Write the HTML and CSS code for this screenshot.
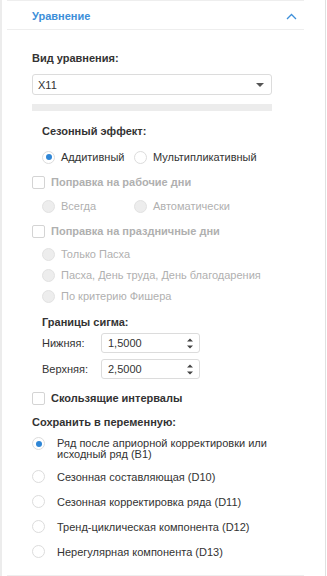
FILE: index.html
```html
<!DOCTYPE html>
<html lang="ru">
<head>
<meta charset="utf-8">
<link rel="stylesheet" href="styles.css">
</head>
<body>
<div class="frame">
  <div class="panel">
    <div class="header">
      <span class="header-title">Уравнение</span>
      <svg class="chevron" width="11" height="7" viewBox="0 0 11 7"><path d="M1 6 L5.5 1.5 L10 6" fill="none" stroke="#3d8fd9" stroke-width="1.3"/></svg>
    </div>
    <div class="content">
      <div class="title t1">Вид уравнения:</div>
      <div class="select">
        <span>X11</span>
        <svg class="caret" width="8" height="4" viewBox="0 0 8 4"><path d="M0 0 H8 L4 4 Z" fill="#555"/></svg>
      </div>
      <div class="bar"></div>

      <div class="indent">
        <div class="title t2">Сезонный эффект:</div>
        <div class="row r-season">
          <label class="opt w-add"><span class="radio checked"></span>Аддитивный</label>
          <label class="opt"><span class="radio"></span>Мультипликативный</label>
        </div>
      </div>

      <label class="row check-row r-work disabled"><span class="check"></span><b>Поправка на рабочие дни</b></label>
      <div class="indent">
        <div class="row r-always disabled">
          <label class="opt w-add"><span class="radio off"></span>Всегда</label>
          <label class="opt"><span class="radio off"></span>Автоматически</label>
        </div>
      </div>

      <label class="row check-row r-hol disabled"><span class="check"></span><b>Поправка на праздничные дни</b></label>
      <div class="indent disabled">
        <label class="row opt r-easter"><span class="radio off"></span>Только Пасха</label>
        <label class="row opt r-next"><span class="radio off"></span>Пасха, День труда, День благодарения</label>
        <label class="row opt r-next"><span class="radio off"></span>По критерию Фишера</label>
      </div>

      <div class="indent">
        <div class="title t-sigma">Границы сигма:</div>
        <div class="spin-row s1">
          <span class="spin-label">Нижняя:</span>
          <div class="spin"><span>1,5000</span>
            <span class="arrows"><svg width="6" height="11" viewBox="0 0 6 11"><path d="M0 3.5 L3 0.5 L6 3.5 Z M0 7.5 L3 10.5 L6 7.5 Z" fill="#444"/></svg></span>
          </div>
        </div>
        <div class="spin-row s2">
          <span class="spin-label">Верхняя:</span>
          <div class="spin"><span>2,5000</span>
            <span class="arrows"><svg width="6" height="11" viewBox="0 0 6 11"><path d="M0 3.5 L3 0.5 L6 3.5 Z M0 7.5 L3 10.5 L6 7.5 Z" fill="#444"/></svg></span>
          </div>
        </div>
      </div>

      <label class="row check-row r-slide"><span class="check"></span><b>Скользящие интервалы</b></label>

      <div class="title t-save">Сохранить в переменную:</div>
      <div class="save-list">
        <label class="save-item first"><span class="radio checked"></span><span class="save-text">Ряд после априорной корректировки или исходный ряд (B1)</span></label>
        <label class="save-item"><span class="radio"></span><span class="save-text">Сезонная составляющая (D10)</span></label>
        <label class="save-item"><span class="radio"></span><span class="save-text">Сезонная корректировка ряда (D11)</span></label>
        <label class="save-item"><span class="radio"></span><span class="save-text">Тренд-циклическая компонента (D12)</span></label>
        <label class="save-item"><span class="radio"></span><span class="save-text">Нерегулярная компонента (D13)</span></label>
      </div>
    </div>
  </div>
</div>
</body>
</html>
```

FILE: styles.css
```css
* { box-sizing: border-box; }
html, body { margin: 0; padding: 0; }
body {
  background: #ffffff;
  font-family: "Liberation Sans", Arial, sans-serif;
  font-size: 11px;
  color: #333333;
  width: 327px;
  height: 576px;
  overflow: hidden;
}
.frame {
  width: 326px;
  height: 576px;
  border-left: 2px solid #ececec;
  border-right: 1px solid #e0e0e0;
}
.panel {
  margin-left: 5px;
  width: 297px;
  height: 576px;
  border-top: 1px solid #eeeeee;
  border-bottom: 1px solid #eeeeee;
}
.header {
  height: 29px;
  border-bottom: 1px solid #eeeeee;
  display: flex;
  align-items: center;
  justify-content: space-between;
  padding: 0 7px 0 25px;
}
.header-title {
  font-weight: bold;
  font-size: 11px;
  color: #3d8fd9;
  line-height: 16px;
  margin-top: 1px;
}
.chevron { margin-top: 2px; }
.content { padding-left: 25px; }
.title {
  font-weight: bold;
  line-height: 16px;
  height: 16px;
  color: #333;
}
.t1 { margin-top: 20px; }
.select {
  margin-top: 8px;
  width: 240px;
  height: 21px;
  border: 1px solid #dcdcdc;
  border-radius: 3px;
  display: flex;
  align-items: center;
  justify-content: space-between;
  padding: 0 7px 0 5px;
  color: #333;
}
.bar {
  margin-top: 9px;
  width: 240px;
  height: 7px;
  background: #ececec;
}
.indent { padding-left: 10px; }
.t2 { margin-top: 12px; }
.row {
  display: flex;
  align-items: center;
  height: 16px;
}
.opt {
  display: flex;
  align-items: center;
}
.w-add { width: 92px; }
.r-season { margin-top: 10px; }
.r-work { margin-top: 9px; }
.r-always { margin-top: 8px; }
.r-hol { margin-top: 9px; }
.r-easter { margin-top: 7px; }
.r-next { margin-top: 5px; }
.disabled, .disabled b { color: #b0b0b0; }
.radio {
  width: 13px;
  height: 13px;
  border-radius: 50%;
  border: 1px solid #dcdcdc;
  background: #fff;
  margin-right: 6px;
  flex: none;
  position: relative;
}
.radio.checked::after {
  content: "";
  position: absolute;
  left: 2.5px;
  top: 2.5px;
  width: 6px;
  height: 6px;
  border-radius: 50%;
  background: #2f86d6;
}
.radio.off {
  background: #ededed;
  border-color: #e2e2e2;
}
.check {
  width: 13px;
  height: 13px;
  border: 1px solid #d4d4d4;
  border-radius: 2px;
  background: #fff;
  margin-right: 6px;
  flex: none;
}
.check-row b { font-weight: bold; }
.t-sigma { margin-top: 10px; }
.spin-row {
  display: flex;
  align-items: center;
  height: 20px;
}
.s1 { margin-top: 3px; }
.s2 { margin-top: 6px; }
.spin-label { width: 59px; }
.spin {
  width: 99px;
  height: 20px;
  border: 1px solid #dcdcdc;
  border-radius: 3px;
  display: flex;
  align-items: center;
  justify-content: space-between;
  padding: 0 6px 0 6px;
}
.arrows { display: flex; }
.r-slide { margin-top: 11px; }
.t-save { margin-top: 8px; }
.save-list { margin-top: 8px; }
.save-item {
  display: flex;
  align-items: flex-start;
  margin-top: 9px;
  line-height: 16px;
}
.save-item.first { margin-top: 0; line-height: 11px; }
.save-item .radio { margin-right: 12px; }
.save-item.first .radio { margin-top: -1px; }
.save-item:not(.first) .radio { margin-top: 1px; }
.save-text { width: 212px; }
```
